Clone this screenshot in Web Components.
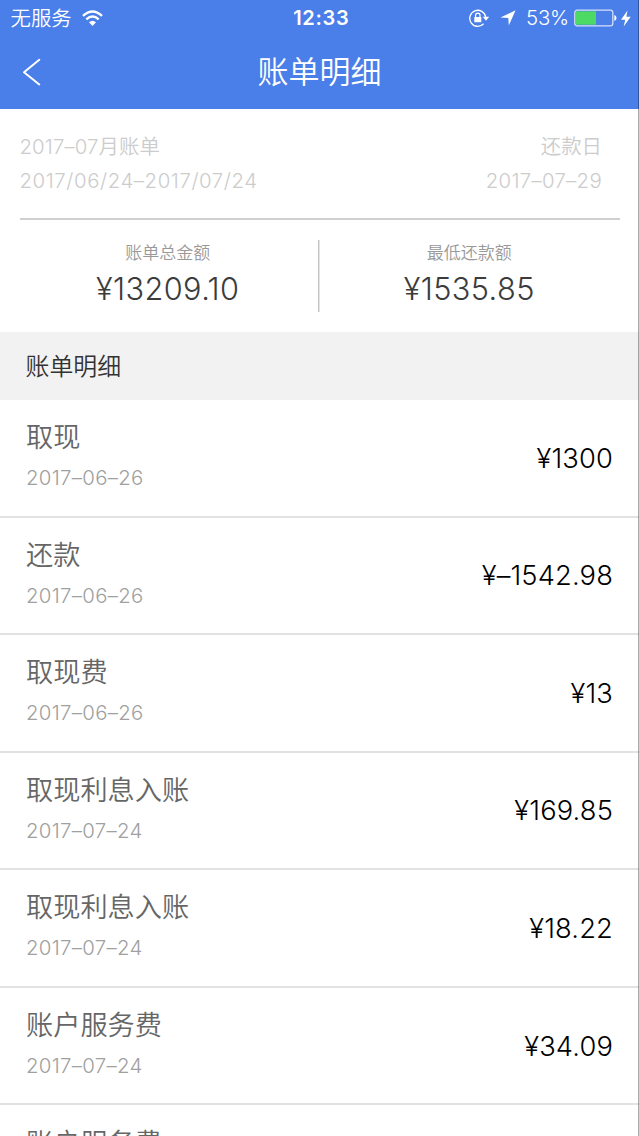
<!DOCTYPE html>
<html lang="zh-CN">
<head>
<meta charset="utf-8">
<title>账单明细</title>
<style>
html,body{margin:0;height:100%;overflow:hidden;background:#fff}
body{font-family:Inter,"Noto Sans CJK SC",sans-serif;font-weight:350}
</style>
</head>
<body>
<bill-app></bill-app>
<script>
const define = (name, html) => customElements.define(name, class extends HTMLElement {
  constructor() {
    super();
    const t = document.createElement('template');
    t.innerHTML = html;
    this.attachShadow({ mode: 'open' }).append(t.content.cloneNode(true));
  }
});

define('status-bar', `
<style>
:host{display:grid;grid-template-columns:1fr auto 1fr;align-items:center;height:34px;padding:1px 8px 0 10.5px;box-sizing:border-box;color:#fff;font-size:20.4px;line-height:34px}
.l,.r{display:flex;align-items:center}
.l span{position:relative;top:1px}
.r{justify-content:flex-end}
.t{font-weight:600;font-size:20px;letter-spacing:.7px;margin-left:1px}
svg{display:block;flex:none}
.p{margin:0 5px 0 10px;font-size:20.4px;letter-spacing:-.2px}
</style>
<div class="l"><span>无服务</span>
<svg style="margin-left:10px" width="21" height="17" viewBox="0 0 21 17"><g fill="none" stroke="#fff" stroke-width="2.4"><path d="M1 5.9Q10.500-2.900 20 5.900"/><path d="M4.300 9.300Q10.500 3.700 16.700 9.300"/></g><path d="M10.500 16 7 12.300Q10.500 9.300 14 12.300Z" fill="#fff"/></svg></div>
<div class="t">12:33</div>
<div class="r">
<svg width="21" height="18" viewBox="0 0 21 18"><path d="M14.600 14.800A8 8 0 1 1 16.700 8" fill="none" stroke="#fff" stroke-width="1.300"/><path d="M13.700 7.800H20.200L17 11.800Z" fill="#fff"/><rect x="5.300" y="8" width="7" height="5.300" rx=".5" fill="#fff"/><path d="M6.600 8V6.300a2.200 2.200 0 0 1 4.400 0V8" fill="none" stroke="#fff" stroke-width="1.200"/></svg>
<svg style="margin-left:10px" width="16" height="16" viewBox="0 0 16 16"><path d="M15.600.300 8.800 15.500 8.300 8 .400 7.600Z" fill="#fff"/></svg>
<span class="p">53%</span>
<svg width="43" height="18" viewBox="0 0 43 18"><rect x=".8" y="1.200" width="38" height="15.600" rx="2.300" fill="none" stroke="#d5e0fb" stroke-width="1.300"/><path d="M2 2.300H22V15.700H2Z" fill="#4cd964"/><path d="M40.300 6q2.200.600 2.200 3t-2.200 3Z" fill="#fff"/></svg>
<svg style="margin-left:4px" width="10" height="17" viewBox="0 0 10 17"><path d="M6.500.500 0 9.700H4.200L2.700 16.500 9.700 6.800H5.400Z" fill="#fff"/></svg>
</div>`);

define('nav-bar', `
<style>
:host{display:grid;grid-template-columns:1fr auto 1fr;align-items:center;height:75px;color:#fff;font-size:31px;line-height:75px}
svg{display:block;margin:0 0 0 22px}
</style>
<svg width="20" height="28" viewBox="0 0 20 28"><path d="M17.300 1.700 2 14.300 17.300 26.500" fill="none" stroke="#fff" stroke-width="2" stroke-linecap="round" stroke-linejoin="round"/></svg>
<span><slot></slot></span><i></i>`);

define('bill-period', `
<style>
:host{display:flex;justify-content:space-between;height:111px;box-sizing:border-box;margin:0 19px 0 20px;padding:21px 18px 0 0;border-bottom:2px solid #d0d0d0;color:#ccc;font-size:20.4px;line-height:34px}
.l{margin-left:-.5px}
.r{text-align:right}
.n{letter-spacing:.1px}
.w{letter-spacing:.57px}
.m{letter-spacing:.3px}
</style>
<div class="l"><span class="n"><slot name="name"></slot></span><br><span class="w"><slot name="range"></slot></span></div>
<div class="r"><slot name="label"></slot><br><span class="m"><slot name="due"></slot></span></div>`);

define('bill-total', `
<style>
:host{display:block;text-align:center;color:#3c3c3c;font-size:30.7px}
.k{color:#999;font-size:17px;line-height:26px}
.v{line-height:46px;letter-spacing:.4px}
</style>
<div class="k"><slot name="label"></slot></div><div class="v"><slot></slot></div>`);

define('bill-totals', `
<style>
:host{display:flex;height:72px;padding:20px 20px 20px 18px}
i{width:1px;background:#c4c4c4;flex:none;border-right:1px solid #e4e4e4}
::slotted(*){flex:1 1 0}
</style>
<slot name="a"></slot><i></i><slot name="b"></slot>`);

define('section-title', `
<style>
:host{display:block;height:68px;padding-left:25.500px;background:#f2f2f2;color:#333;font-size:23.9px;line-height:70px}
</style><slot></slot>`);

define('bill-row', `
<style>
:host{display:flex;justify-content:space-between;align-items:center;flex:none;height:117.55px;box-sizing:border-box;padding:0 26px;border-bottom:2px solid #e2e2e2}
.n{font-size:27.2px;line-height:40px;color:#666}
.d{font-size:20.4px;line-height:34px;margin:3px 0 2px;color:#a0a0a0;letter-spacing:.3px}
.a{font-size:27.3px;line-height:40px;padding-top:2px;color:#000;letter-spacing:.15px}
</style>
<div><div class="n"></div><div class="d"></div></div><div class="a"></div>`);

class BillList extends HTMLElement {
  constructor() {
    super();
    this.attachShadow({ mode: 'open' }).innerHTML = `<style>:host{display:flex;flex-direction:column}</style>`;
    const rows = [
      ['取现', '2017–06–26', '¥1300'],
      ['还款', '2017–06–26', '¥–1542.98'],
      ['取现费', '2017–06–26', '¥13'],
      ['取现利息入账', '2017–07–24', '¥169.85'],
      ['取现利息入账', '2017–07–24', '¥18.22'],
      ['账户服务费', '2017–07–24', '¥34.09'],
      ['账户服务费', '', '']
    ];
    for (const [n, d, a] of rows) {
      const el = document.createElement('bill-row');
      el.shadowRoot.querySelector('.n').textContent = n;
      el.shadowRoot.querySelector('.d').textContent = d || '\u00a0';
      el.shadowRoot.querySelector('.a').textContent = a;
      this.shadowRoot.append(el);
    }
  }
}
customElements.define('bill-list', BillList);

define('bill-app', `
<style>
:host{display:block;position:relative;width:639px;height:1136px;overflow:hidden;background:#fff}
header{background:#4a7ee8}
.edge{position:absolute;right:0;top:0;width:1px;height:100%;background:rgba(0,0,0,.33)}
</style>
<header><status-bar></status-bar><nav-bar>账单明细</nav-bar></header>
<bill-period><span slot="name">2017–07月账单</span><span slot="range">2017/06/24–2017/07/24</span><span slot="label">还款日</span><span slot="due">2017–07–29</span></bill-period>
<bill-totals>
<bill-total slot="a"><span slot="label">账单总金额</span>¥13209.10</bill-total>
<bill-total slot="b"><span slot="label">最低还款额</span>¥1535.85</bill-total>
</bill-totals>
<section-title>账单明细</section-title>
<bill-list></bill-list>
<div class="edge"></div>`);
</script>
</body>
</html>
